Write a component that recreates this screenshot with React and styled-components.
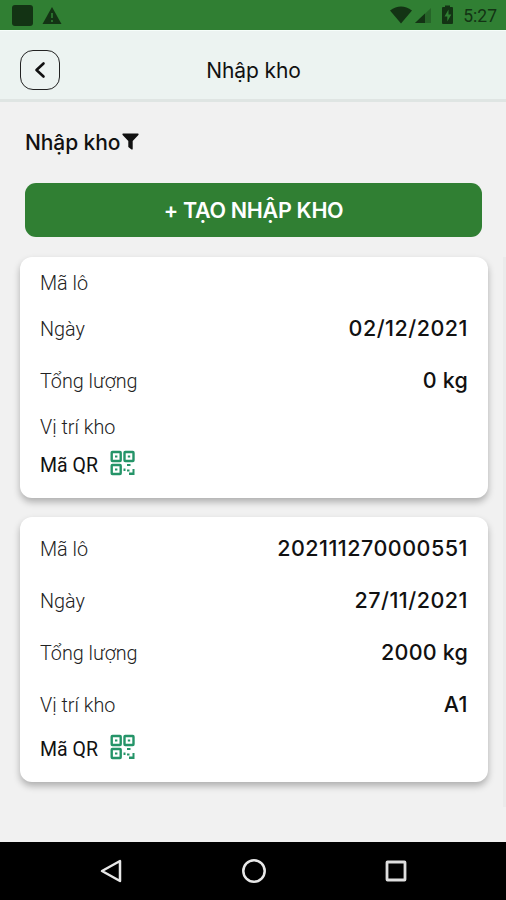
import React from 'react';
import styled, { createGlobalStyle } from 'styled-components';

const GlobalStyle = createGlobalStyle`
  * {
    box-sizing: border-box;
  }

  body {
    margin: 0;
    background: #f1f1f1;
    color: #111;
    font-family: Inter, Roboto, sans-serif;
  }
`;

const Screen = styled.div`
  display: flex;
  flex-direction: column;
  width: 506px;
  height: 900px;
  overflow: hidden;
  background: #f1f1f1;
`;

const StatusBar = styled.div`
  display: flex;
  flex-shrink: 0;
  align-items: center;
  justify-content: space-between;
  height: 30px;
  padding: 0 9px 0 12px;
  background: #307f33;
  color: #133314;
`;

const StatusGroup = styled.div`
  display: flex;
  align-items: center;
`;

const AppIndicator = styled.span`
  width: 21px;
  height: 21px;
  margin-right: 9px;
  border-radius: 3px;
  background: #133314;
`;

const Clock = styled.span`
  margin-left: 8px;
  padding-top: 2px;
  font-family: Roboto, sans-serif;
  font-size: 17.5px;
  line-height: 20px;
`;

const Header = styled.header`
  display: grid;
  flex-shrink: 0;
  grid-template-columns: 40px 1fr 40px;
  align-items: center;
  height: 72px;
  padding: 9px 19px 0 20px;
  border-top: 1px solid #f6fdfa;
  border-bottom: 3px solid #dfe5e3;
  background: #ecf3f1;
`;

const BackButton = styled.button`
  display: flex;
  align-items: center;
  justify-content: center;
  width: 40px;
  height: 40px;
  padding: 0;
  border: 1px solid #222;
  border-radius: 13px;
  background: transparent;
`;

const Title = styled.h1`
  margin: 0;
  padding-top: 2px;
  text-align: center;
  font-size: 21px;
  font-weight: 400;
  line-height: 26px;
  letter-spacing: -0.1px;
`;

const Main = styled.main`
  display: flex;
  flex: 1;
  flex-direction: column;
  min-height: 0;
`;

const SectionTitle = styled.h2`
  display: flex;
  align-items: center;
  gap: 2px;
  height: 26px;
  margin: 27px 25px 28px;
  font-size: 21px;
  font-weight: 500;
  letter-spacing: -0.1px;

  svg {
    margin-bottom: 2px;
  }
`;

const CreateButton = styled.button`
  flex-shrink: 0;
  height: 54px;
  margin: 0 24px 20px 25px;
  border: 0;
  border-radius: 11px;
  background: #307f33;
  color: #fff;
  font-family: inherit;
  font-size: 21.5px;
  font-weight: 600;
  letter-spacing: -0.3px;
`;

const Pager = styled.div`
  display: flex;
  justify-content: space-between;
  height: 550px;
  padding-left: 20px;
`;

const CardList = styled.div`
  display: flex;
  flex-direction: column;
  gap: 19px;
  width: 468px;
`;

const NextPage = styled.div`
  width: 3px;
  background: #ebebeb;
`;

const Card = styled.article`
  padding: 6px 20px 15px;
  border-radius: 12px;
  background: #fff;
  box-shadow: 0 4px 7px rgba(0, 0, 0, 0.28);
`;

const Row = styled.div`
  display: flex;
  align-items: center;
  justify-content: space-between;
  height: ${props => (props.$empty ? '40px' : '52px')};
`;

const Label = styled.span`
  color: #222;
  font-family: Roboto, sans-serif;
  font-size: 19.8px;
  font-weight: 300;
`;

const Value = styled.span`
  padding-bottom: 2px;
  font-size: 21.5px;
  font-weight: 500;
  letter-spacing: ${props => (props.$tight ? '0.2px' : '0.5px')};
`;

const QrRow = styled.div`
  display: flex;
  align-items: center;
  gap: 12px;
  height: 36px;
  font-family: Roboto, sans-serif;
  font-size: 19.5px;

  svg {
    margin-bottom: 4px;
  }
`;

const NavBar = styled.nav`
  display: flex;
  flex-shrink: 0;
  align-items: center;
  justify-content: space-between;
  height: 58px;
  padding: 0 98px 0 99px;
  background: #000;
`;

const WarningIcon = () => (
  <svg width="20" height="17" viewBox="0 0 20 17">
    <path d="M10 0 19.5 17H.5Z" fill="#133314" />
    <path d="M10 6v5M10 13v2" stroke="#307f33" strokeWidth="1.6" />
  </svg>
);

const SignalIcons = () => (
  <svg width="65" height="22" viewBox="0 0 65 22" fill="currentColor">
    <path d="M0 6.5Q11 -1.5 22 6.5L11 19.5Z" />
    <path d="M41 4v15H25Z" opacity=".35" />
    <path d="M35 9.6V19H25Z" />
    <path d="M53 3h2V1.5h5V3h2q1 0 1 1v15q0 1-1 1h-9q-1 0-1-1V4q0-1 1-1Z" />
    <path d="m58.5 5.5-4 7h2.8v5l4-7h-2.8Z" fill="#307f33" />
  </svg>
);

const BackIcon = () => (
  <svg width="12" height="18" viewBox="0 0 12 18" fill="none">
    <path
      d="m9.5 2.5-7 6.5 7 6.5"
      stroke="#111"
      strokeWidth="2.6"
      strokeLinecap="round"
      strokeLinejoin="round"
    />
  </svg>
);

const FilterIcon = () => (
  <svg width="17" height="17" viewBox="0 0 17 17">
    <path d="M.8.5h15.4q.8.6.2 1.4L10.7 8v8.3q-.5.5-1.2.1L6.3 14V8L.6 1.9Q0 1.1.8.5Z" fill="#111" />
  </svg>
);

const QrIcon = () => (
  <svg width="25" height="26" viewBox="0 0 25 26" fill="none">
    <g stroke="#249468" strokeWidth="2.4">
      <rect x="1.7" y="2" width="9" height="9" rx=".7" />
      <rect x="14.5" y="2" width="9" height="9" rx=".7" />
      <rect x="1.7" y="15" width="9" height="9" rx=".7" />
    </g>
    <path
      d="M5 5.5h2.4v2H5zM17.8 5.5h2.4v2h-2.4zM5 18.5h2.4v2H5zM17 14h3.5v2H17zM13.5 18.5h2v2.500h-2zM17 19.5h2.5v2H17zM22.5 19h2v6H19v-2.500h3.500z"
      fill="#249468"
    />
  </svg>
);

const receipts = [
  { code: '', date: '02/12/2021', total: '0 kg', position: '' },
  { code: '202111270000551', date: '27/11/2021', total: '2000 kg', position: 'A1' },
];

const Field = ({ label, value, tight }) => (
  <Row $empty={!value}>
    <Label>{label}</Label>
    {value && <Value $tight={tight}>{value}</Value>}
  </Row>
);

const App = () => {
  return (
    <>
      <GlobalStyle />
      <Screen>
        <StatusBar>
          <StatusGroup>
            <AppIndicator />
            <WarningIcon />
          </StatusGroup>
          <StatusGroup>
            <SignalIcons />
            <Clock>5:27</Clock>
          </StatusGroup>
        </StatusBar>

        <Header>
          <BackButton aria-label="Quay lại">
            <BackIcon />
          </BackButton>
          <Title>Nhập kho</Title>
        </Header>

        <Main>
          <SectionTitle>
            Nhập kho
            <FilterIcon />
          </SectionTitle>
          <CreateButton>+ TẠO NHẬP KHO</CreateButton>
          <Pager>
            <CardList>
              {receipts.map(receipt => (
                <Card key={receipt.date}>
                  <Field label="Mã lô" value={receipt.code} />
                  <Field label="Ngày" value={receipt.date} />
                  <Field label="Tổng lượng" value={receipt.total} tight />
                  <Field label="Vị trí kho" value={receipt.position} />
                  <QrRow>
                    Mã QR
                    <QrIcon />
                  </QrRow>
                </Card>
              ))}
            </CardList>
            <NextPage />
          </Pager>
        </Main>

        <NavBar>
          <svg width="24" height="26" viewBox="0 0 24 26" fill="none">
            <path d="M21 3v20L3 13Z" stroke="#e8e8e8" strokeWidth="2.5" strokeLinejoin="round" />
          </svg>
          <svg width="26" height="26" viewBox="0 0 26 26" fill="none">
            <circle cx="13" cy="13" r="10.7" stroke="#e8e8e8" strokeWidth="2.5" />
          </svg>
          <svg width="24" height="24" viewBox="0 0 24 24" fill="none">
            <rect x="3" y="3" width="18" height="18" rx=".5" stroke="#dedede" strokeWidth="2.8" />
          </svg>
        </NavBar>
      </Screen>
    </>
  );
};

export default App;
